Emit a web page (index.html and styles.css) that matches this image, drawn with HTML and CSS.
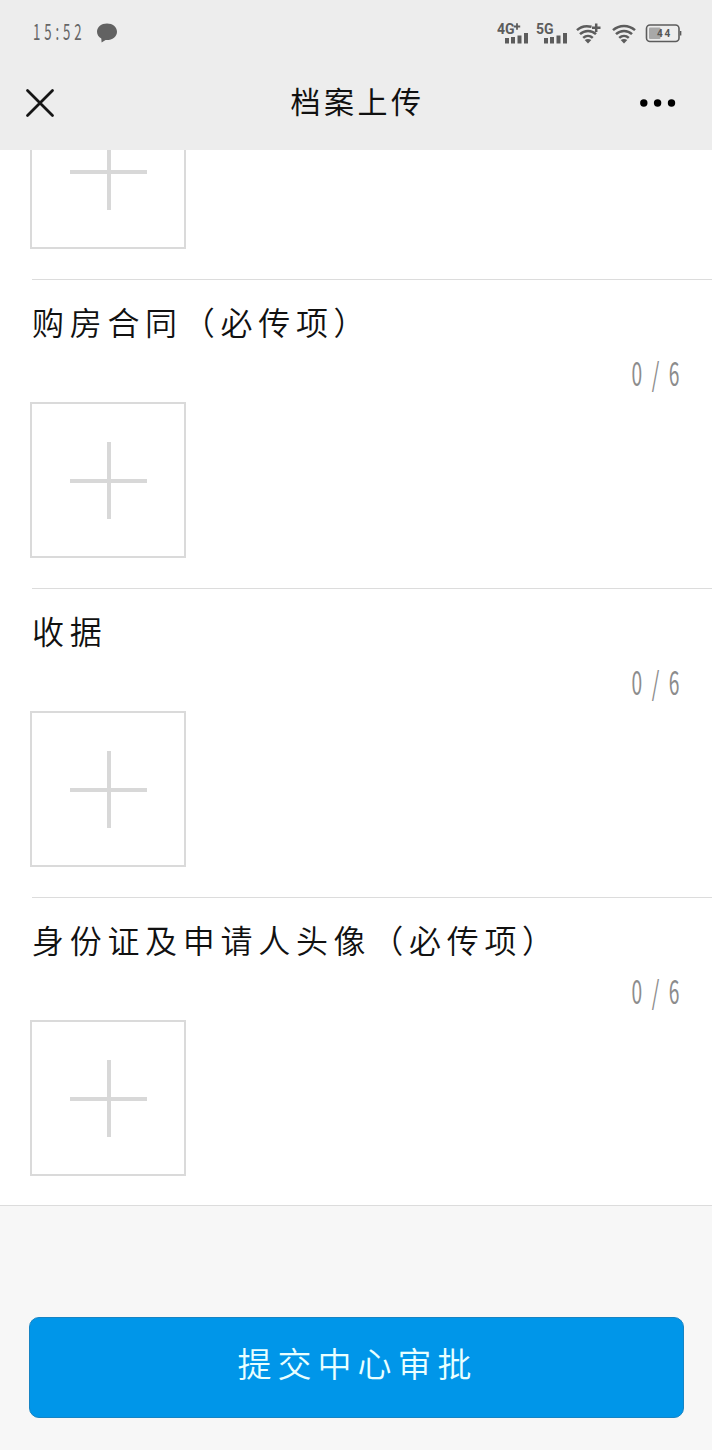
FILE: index.html
```html
<!DOCTYPE html>
<html lang="zh-CN">
<head>
    <meta charset="UTF-8">
    <meta name="viewport" content="width=device-width, initial-scale=1.0">
    <title>档案上传</title>
    <link rel="stylesheet" href="styles.css">
</head>
<body>
    <header class="header">
        <div class="status-bar">
            <span class="time">15:52</span>
            <svg class="bubble" width="22" height="22" viewBox="0 0 22 22">
                <path d="M11 1.500C5.400 1.500 1 5 1 9.700c0 3 1.700 5.300 4.300 6.800L5.600 20.500l4-2.500c6.400.5 11.400-3.400 11.400-8.300C21 5 16.600 1.500 11 1.500z" fill="#626262"/>
            </svg>
            <div class="status-icons">
                <svg width="34" height="26" viewBox="0 0 34 26">
                    <text class="net" x="0" y="14">4G</text>
                    <path d="M16.800 6.500h6.400M20 3.300v6.400" stroke="#5c5c5c" stroke-width="1.800"/>
                    <path d="M10 18v5.500M16 17v6.500M22.500 15.500v8M29 13v10.500" stroke="#5c5c5c" stroke-width="4"/>
                </svg>
                <svg width="34" height="26" viewBox="0 0 34 26">
                    <text class="net" x="0" y="14">5G</text>
                    <path d="M10 18v5.500M16 17v6.500M22.500 15.500v8M29 13v10.500" stroke="#5c5c5c" stroke-width="4"/>
                </svg>
                <svg class="wifi-plus" width="26" height="22" viewBox="0 0 26 22">
                    <g fill="none" stroke="#5c5c5c" stroke-width="2.500">
                        <path d="M1 8.100C5 4.300 10 3.400 15.500 4.800"/>
                        <path d="M4 12.100c4.500-4.200 11.500-4.300 16 0"/>
                        <path d="M7.200 15.900c2.800-2.500 6.800-2.500 9.600 0"/>
                        <path d="M16 5.800h8.500M20.200 1.600v8.400"/>
                    </g>
                    <path d="M8.700 18c2-1.500 4.600-1.500 6.600 0L12 21.600z" fill="#5c5c5c"/>
                </svg>
                <svg class="wifi" width="24" height="22" viewBox="0 0 24 22">
                    <g fill="none" stroke="#5c5c5c" stroke-width="2.500">
                        <path d="M1 8.100c6.200-5.600 15.800-5.600 22 0"/>
                        <path d="M4 12.100c4.500-4.200 11.500-4.300 16 0"/>
                        <path d="M7.200 15.900c2.800-2.500 6.800-2.500 9.600 0"/>
                    </g>
                    <path d="M8.700 18c2-1.500 4.600-1.500 6.600 0L12 21.600z" fill="#5c5c5c"/>
                </svg>
                <svg class="battery" width="37" height="20" viewBox="0 0 37 20">
                    <rect x="1.500" y="2" width="32.500" height="16.500" rx="3.500" fill="none" stroke="#5c5c5c" stroke-width="1.600"/>
                    <rect x="4" y="4.500" width="11.500" height="11.500" rx="1" fill="#a8a8a8"/>
                    <path d="M35.600 8v4.500" stroke="#5c5c5c" stroke-width="1.500"/>
                    <text class="battery-level" x="12" y="13.500">4</text>
                    <text class="battery-level" x="19.500" y="13.500">4</text>
                </svg>
            </div>
        </div>
        <div class="nav-bar">
            <svg width="30" height="30" viewBox="0 0 30 30">
                <path d="M2.500 2.500l25 25M27.500 2.500l-25 25" stroke="#161616" stroke-width="2.800" stroke-linecap="round"/>
            </svg>
            <h1 class="nav-title">档案上传</h1>
            <svg width="36" height="10" viewBox="0 0 36 10">
                <circle cx="3.800" cy="5" r="3.700"/>
                <circle cx="17.600" cy="5" r="3.700"/>
                <circle cx="31.500" cy="5" r="3.700"/>
            </svg>
        </div>
    </header>

    <main class="list">
        <section class="item item-clipped">
            <div class="upload"></div>
        </section>
        <section class="item">
            <h2 class="item-title">购房合同（必传项）</h2>
            <div class="count">0/6</div>
            <div class="upload"></div>
        </section>
        <section class="item">
            <h2 class="item-title">收据</h2>
            <div class="count">0/6</div>
            <div class="upload"></div>
        </section>
        <section class="item">
            <h2 class="item-title">身份证及申请人头像（必传项）</h2>
            <div class="count">0/6</div>
            <div class="upload"></div>
        </section>
    </main>

    <footer class="footer">
        <button class="submit">提交中心审批</button>
    </footer>
</body>
</html>
```
FILE: styles.css
```css
* {
    box-sizing: border-box;
}
body {
    font-family: "Noto Sans CJK SC", sans-serif;
    font-weight: 300;
    margin: 0;
    min-height: 1450px;
    background-color: #f7f7f7;
    color: #111;
}
h1, h2 {
    margin: 0;
}
.header {
    height: 150px;
    background-color: #ededed;
}
.status-bar {
    display: flex;
    align-items: center;
    height: 66px;
    padding: 0 30px 0 33px;
}
.time {
    width: 63px;
    font-size: 22px;
    font-weight: 400;
    line-height: 30px;
    letter-spacing: 6.5px;
    color: #666;
    white-space: nowrap;
    transform: scaleX(0.6);
    transform-origin: left;
    margin-top: -7px;
}
.status-icons {
    display: flex;
    align-items: center;
    gap: 5px;
    margin-left: auto;
}
.wifi-plus {
    margin-left: 1px;
}
.wifi {
    margin-left: 5px;
}
.battery {
    margin-left: 4px;
}
.net {
    font-family: Roboto, sans-serif;
    font-size: 14px;
    font-weight: 700;
    fill: #5c5c5c;
}
.battery-level {
    font-family: Roboto, sans-serif;
    font-size: 10px;
    font-weight: 700;
    fill: #555;
}
.nav-bar {
    display: flex;
    align-items: center;
    justify-content: space-between;
    height: 74px;
    padding: 0 36px 0 25px;
}
.nav-title {
    font-size: 30px;
    font-weight: 400;
    line-height: 40px;
    letter-spacing: 3.5px;
    margin: -6px 0 0 20px;
}
.list {
    background-color: #fff;
    border-bottom: 1px solid #dcdcdc;
}
.item {
    display: flex;
    flex-direction: column;
    height: 309px;
    margin-left: 32px;
    padding: 21px 32px 30px 0;
    border-top: 1px solid #dcdcdc;
}
.item:last-child {
    height: 308px;
    padding-bottom: 29px;
}
.item-clipped {
    height: 129px;
    padding-top: 0;
    border-top: none;
    justify-content: flex-end;
    overflow: hidden;
    margin-left: 0;
    padding-left: 32px;
}
.item-title {
    font-size: 32px;
    font-weight: 350;
    line-height: 40px;
    letter-spacing: 5.7px;
    white-space: nowrap;
}
.count {
    align-self: flex-end;
    margin: 11px -9px 9px 0;
    font-size: 32px;
    font-weight: 400;
    line-height: 41px;
    letter-spacing: 16px;
    color: #8c8c8c;
    transform: scaleX(0.6);
    transform-origin: right;
}
.upload {
    flex: none;
    width: 156px;
    height: 156px;
    margin-left: -2px;
    border: 2px solid #dadada;
    background:
        linear-gradient(#d8d8d8, #d8d8d8) 38px 75px / 77px 4px no-repeat,
        linear-gradient(#d8d8d8, #d8d8d8) 75px 38px / 4px 77px no-repeat;
}
.footer {
    padding: 111px 28px 32px 29px;
}
.submit {
    display: block;
    width: 100%;
    height: 101px;
    padding: 0 0 10px 2px;
    border: 1px solid #1684c4;
    border-radius: 10px;
    background-color: #0096e9;
    color: #e9ffff;
    font-family: inherit;
    font-size: 34px;
    font-weight: 350;
    letter-spacing: 6px;
}
```
